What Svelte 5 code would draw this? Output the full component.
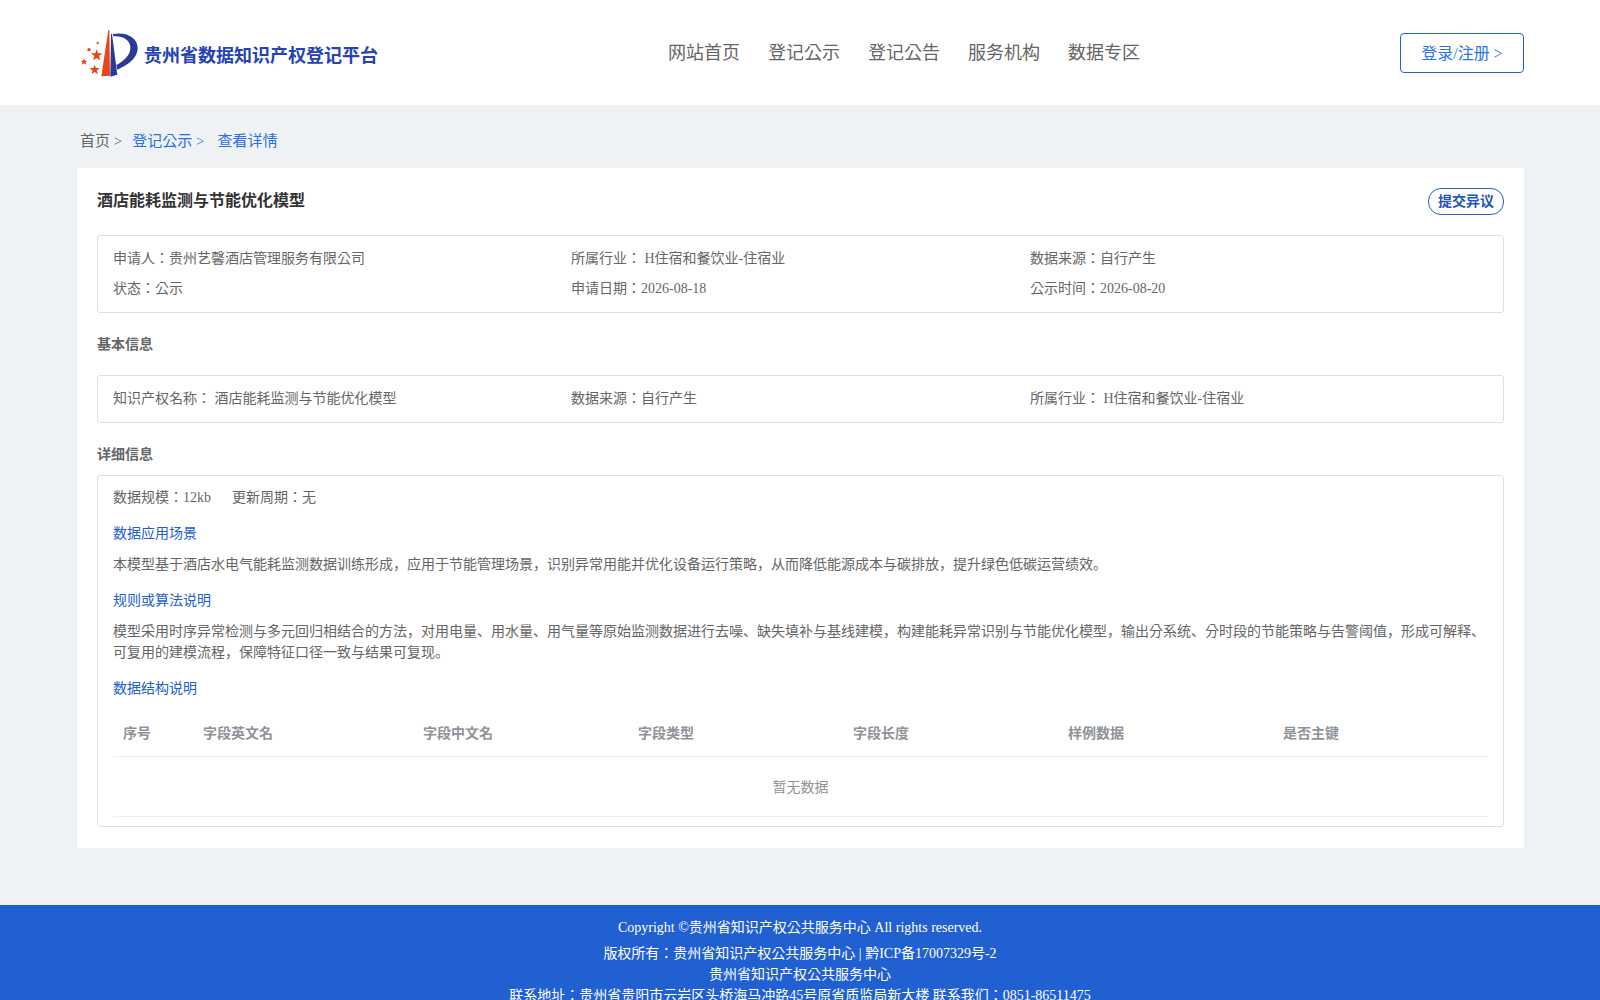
<script>
  const nav = ['网站首页', '登记公示', '登记公告', '服务机构', '数据专区'];
  const summary = [
    ['申请人：贵州艺馨酒店管理服务有限公司', '所属行业： H住宿和餐饮业-住宿业', '数据来源：自行产生'],
    ['状态：公示', '申请日期：2026-08-18', '公示时间：2026-08-20']
  ];
  const basic = ['知识产权名称： 酒店能耗监测与节能优化模型', '数据来源：自行产生', '所属行业： H住宿和餐饮业-住宿业'];
  const columns = [
    ['序号', 80],
    ['字段英文名', 220],
    ['字段中文名', 215],
    ['字段类型', 215],
    ['字段长度', 215],
    ['样例数据', 215],
    ['是否主键', 215]
  ];
</script>

<div class="page">
  <header class="topbar">
    <div class="brand">
      <svg class="logo" viewBox="0 0 210 180" width="70" height="60">
        <path d="M103 18 L106 18 L108 155 L82 157 Z" fill="#e8461a" />
        <path d="M111 30 L114 30 L130 152 L109 158 Z" fill="#2b3a94" />
        <path d="M117 30 C160 22 191 43 191 72 C191 105 157 125 130 137 L127 123 C150 110 171 92 169 68 C167 45 142 34 118 37 Z" fill="#2b3a94" />
        <path d="M68 76 L72 88 L85 88 L75 96 L79 109 L68 102 L57 109 L61 96 L51 88 L64 88 Z" fill="#e8461a" />
        <path d="M62 123 L66 132 L77 132 L68 140 L72 151 L62 144 L52 151 L56 140 L47 132 L58 132 Z" fill="#e8461a" />
        <path d="M30 103 L33 110 L40 110 L35 115 L37 122 L30 118 L23 122 L25 115 L20 110 L27 110 Z" fill="#e8461a" />
        <circle cx="45" cy="77" r="5" fill="#e8461a" />
        <circle cx="71" cy="57" r="3.5" fill="#e8461a" />
      </svg>
      <span class="brand-name">贵州省数据知识产权登记平台</span>
    </div>
    <nav class="menu">
      {#each nav as item}
        <a href="#top">{item}</a>
      {/each}
    </nav>
    <button class="login">登录/注册 &gt;</button>
  </header>

  <div class="crumbs">
    <span>首页 &gt;</span>
    <a href="#top" class="crumb-mid">登记公示 &gt;</a>
    <a href="#top">查看详情</a>
  </div>

  <main class="card">
    <div class="title-row">
      <h1>酒店能耗监测与节能优化模型</h1>
      <button class="objection">提交异议</button>
    </div>

    <div class="box summary">
      {#each summary as row}
        <div class="cols">
          {#each row as cell}
            <span>{cell}</span>
          {/each}
        </div>
      {/each}
    </div>

    <h2 class="basic-title">基本信息</h2>
    <div class="box basic">
      <div class="cols">
        {#each basic as cell}
          <span>{cell}</span>
        {/each}
      </div>
    </div>

    <h2 class="detail-title">详细信息</h2>
    <div class="box detail">
      <div class="meta">
        <span>数据规模：12kb</span>
        <span>更新周期：无</span>
      </div>
      <h3>数据应用场景</h3>
      <p>本模型基于酒店水电气能耗监测数据训练形成，应用于节能管理场景，识别异常用能并优化设备运行策略，从而降低能源成本与碳排放，提升绿色低碳运营绩效。</p>
      <h3>规则或算法说明</h3>
      <p>模型采用时序异常检测与多元回归相结合的方法，对用电量、用水量、用气量等原始监测数据进行去噪、缺失填补与基线建模，构建能耗异常识别与节能优化模型，输出分系统、分时段的节能策略与告警阈值，形成可解释、可复用的建模流程，保障特征口径一致与结果可复现。</p>
      <h3>数据结构说明</h3>
      <table>
        <thead>
          <tr>
            {#each columns as [name, width]}
              <th style="width: {width}px">{name}</th>
            {/each}
          </tr>
        </thead>
        <tbody>
          <tr>
            <td colspan="7">暂无数据</td>
          </tr>
        </tbody>
      </table>
    </div>
  </main>

  <footer class="footer">
    <div class="copyright">Copyright ©贵州省知识产权公共服务中心 All rights reserved.</div>
    <div>版权所有：贵州省知识产权公共服务中心 | 黔ICP备17007329号-2</div>
    <div>贵州省知识产权公共服务中心</div>
    <div>联系地址：贵州省贵阳市云岩区头桥海马冲路45号原省质监局新大楼 联系我们：0851-86511475</div>
  </footer>
</div>

<style>
  :global(body) {
    margin: 0;
    background: #eff2f5;
    overflow: hidden;
  }

  .page {
    height: 1000px;
    overflow: hidden;
    font-family: "Liberation Serif", "Noto Sans CJK KR", serif;
    font-size: 14px;
    color: #666;
  }

  a {
    text-decoration: none;
  }

  .topbar {
    height: 105px;
    padding: 0 76px 0 74px;
    background: #fff;
    display: flex;
    align-items: center;
  }

  .brand {
    width: 594px;
    display: flex;
    align-items: center;
    margin-top: 2px;
  }

  .brand-name {
    font-size: 18px;
    font-weight: 700;
    color: #2543b3;
    margin-top: 1px;
  }

  .menu {
    display: flex;
    gap: 28px;
    margin-top: -3px;
  }

  .menu a {
    font-size: 18px;
    color: #666;
  }

  .login {
    margin-left: auto;
    width: 124px;
    height: 40px;
    padding: 0 0 2px;
    border: 1px solid #2060d8;
    border-radius: 4px;
    background: #fff;
    color: #2d74e6;
    font: inherit;
    font-size: 16px;
  }

  .crumbs {
    padding: 0 80px;
    height: 63px;
    line-height: 72px;
    font-size: 15px;
    display: flex;
    color: #666;
  }

  .crumbs a {
    color: #2a6fe0;
  }

  .crumb-mid {
    margin: 0 13px 0 10px;
  }

  .card {
    margin: 0 76px 0 77px;
    padding: 20px 20px 21px;
    background: #fff;
  }

  .title-row {
    display: flex;
    justify-content: space-between;
    align-items: flex-start;
    height: 47px;
  }

  h1 {
    margin: 1px 0 0;
    font-size: 16px;
    line-height: 24px;
    font-weight: 700;
    color: #333;
  }

  .objection {
    height: 27px;
    width: 76px;
    padding: 0 0 3px;
    border: 1px solid #2060d0;
    border-radius: 13px;
    background: #fff;
    color: #2255b8;
    font: inherit;
    font-size: 14px;
    font-weight: 700;
  }

  .box {
    border: 1px solid #dcdfe3;
    border-radius: 3px;
    padding: 0 15px;
  }

  .cols {
    display: grid;
    grid-template-columns: 458px 459px 1fr;
    line-height: 20px;
  }

  .summary {
    padding-top: 13px;
    height: 63px;
  }

  .summary .cols + .cols {
    margin-top: 10px;
  }

  h2 {
    margin: 0;
    font-size: 14px;
    line-height: 20px;
    font-weight: 700;
    color: #666;
  }

  .basic-title {
    margin-top: 22px;
    margin-bottom: 20px;
  }

  .basic {
    padding-top: 13px;
    padding-bottom: 13px;
  }

  .detail-title {
    margin-top: 22px;
    margin-bottom: 10px;
  }

  .detail {
    padding-top: 12px;
    padding-bottom: 9px;
  }

  .meta {
    display: flex;
    gap: 21px;
    line-height: 20px;
  }

  h3 {
    margin: 16px 0 0;
    font-size: 14px;
    font-weight: 400;
    line-height: 20px;
    color: #2060d0;
  }

  p {
    margin: 10px 0 0;
    line-height: 21px;
    color: #666;
  }

  table {
    width: 100%;
    margin-top: 10px;
    border-collapse: collapse;
    table-layout: fixed;
  }

  th {
    box-sizing: border-box;
    height: 47px;
    padding: 0 10px;
    text-align: left;
    font-weight: 700;
    color: #909399;
    border-bottom: 1px solid #ebeef5;
  }

  td {
    height: 57px;
    text-align: center;
    color: #909399;
    border-bottom: 1px solid #ebeef5;
  }

  .footer {
    margin-top: 57px;
    padding-top: 12px;
    height: 110px;
    background: #2160d1;
    color: #fff;
    text-align: center;
    line-height: 21px;
  }

  .copyright {
    margin-bottom: 5px;
  }
</style>
